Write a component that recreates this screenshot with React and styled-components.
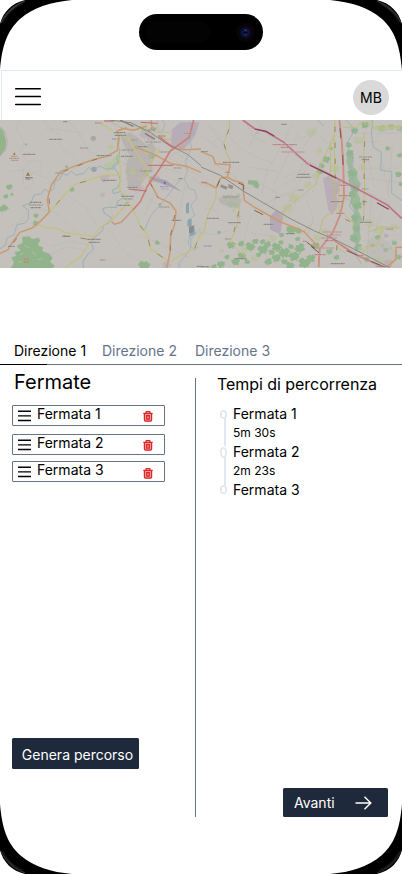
import React from "react";
import styled, { createGlobalStyle } from "styled-components";

const GlobalStyle = createGlobalStyle`
  * { box-sizing: border-box; }
  body { margin: 0; background: #fff; }
  button { font: inherit; border: 0; padding: 0; background: none; color: inherit; }
`;

const Screen = styled.div`
  position: relative;
  width: 402px;
  height: 874px;
  overflow: hidden;
  display: flex;
  flex-direction: column;
  background: #fff;
  color: #000;
  font-family: Inter, "Liberation Sans", sans-serif;
  font-size: 14px;
  line-height: 17px;
`;

const Bezel = styled.svg`
  position: absolute;
  inset: 0;
  pointer-events: none;
`;

const StatusBar = styled.div`
  height: 70px;
  flex: none;
  padding-top: 14px;
  display: flex;
  justify-content: center;
  align-items: flex-start;
`;

const Island = styled.svg`
  display: block;
`;

const Header = styled.header`
  height: 50px;
  flex: none;
  margin-left: 1px;
  padding: 0 13px;
  border-top: 1px solid #e2e8f0;
  border-left: 1px solid #e2e8f0;
  display: flex;
  align-items: center;
  justify-content: space-between;
`;

const IconButton = styled.button`
  display: flex;
  flex: none;
  margin-top: ${(p) => p.$drop || 0}px;
`;

const Avatar = styled.div`
  width: 36px;
  height: 35px;
  margin-top: 4px;
  border-radius: 50%;
  background: #d9d9d9;
  display: flex;
  align-items: center;
  justify-content: center;
`;

const MapView = styled.svg`
  display: block;
  flex: none;
  width: 402px;
  height: 148px;
  background: #c4c0bb;
`;

const Tabs = styled.nav`
  display: grid;
  flex: none;
  grid-template-columns: 88px 93px auto;
  justify-items: start;
  align-content: start;
  height: 97px;
  padding: 74px 14px 0;
  background: linear-gradient(90deg, #000 47px, #64748b 47px) bottom / 100% 1px no-repeat;
`;

const Tab = styled.button`
  height: 17px;
  white-space: nowrap;
  color: ${(p) => (p.$active ? "#000" : "#64748b")};
`;

const Columns = styled.main`
  flex: 1;
  display: grid;
  grid-template-columns: 195px 1px 206px;
`;

const StopsPanel = styled.section`
  display: flex;
  flex-direction: column;
  align-items: flex-start;
  padding: 5px 0 0 12px;
`;

const Title = styled.h1`
  margin: 0 0 11px 2px;
  font-size: 20px;
  line-height: 24px;
  font-weight: 400;
`;

const Divider = styled.div`
  height: 439px;
  margin-top: 13px;
  background: #64748b;
`;

const StopRow = styled.div`
  width: 153px;
  height: 21px;
  margin-bottom: ${(p) => p.$gap}px;
  padding: 0 11px 0 5px;
  border: 1px solid #64748b;
  border-radius: 1px;
  display: flex;
  align-items: flex-start;
`;

const StopName = styled.span`
  flex: 1;
  margin: -1px 0 0 6px;
`;

const Grip = styled.svg`
  margin-top: 4px;
  flex: none;
`;

const TimesPanel = styled.section`
  display: flex;
  flex-direction: column;
  padding: 10px 14px 57px 21px;
`;

const Subtitle = styled.h2`
  margin: 0 0 11px;
  font-size: 16px;
  line-height: 19px;
  font-weight: 400;
  letter-spacing: -0.05px;
  white-space: nowrap;
`;

const Timeline = styled.div`
  display: flex;
  gap: 5px;
`;

const Track = styled.svg`
  flex: none;
  margin: 3px 0 0 2px;
`;

const Legs = styled.div`
  display: grid;
  grid-template-rows: repeat(5, 19px);
`;

const Duration = styled.span`
  font-size: 12px;
`;

const ActionButton = styled.button`
  display: flex;
  align-items: center;
  justify-content: ${(p) => (p.$wide ? "center" : "space-between")};
  width: ${(p) => (p.$wide ? 127 : 105)}px;
  height: ${(p) => (p.$wide ? 31 : 29)}px;
  padding: ${(p) => (p.$wide ? "1px 0 0 4px" : "0 16px 0 11px")};
  margin-top: ${(p) => (p.$wide ? "256px" : "auto")};
  align-self: ${(p) => (p.$wide ? "flex-start" : "flex-end")};
  border-radius: 1.5px;
  background: #1e293b;
  color: #fff;
  white-space: nowrap;
`;

const corners = [
  { id: "nw", transform: "", tone: "#3a3a3a" },
  { id: "ne", transform: "translate(402 0) scale(-1 1)", tone: "#303030" },
  { id: "sw", transform: "translate(0 874) scale(1 -1)", tone: "#2c2c2c" },
  { id: "se", transform: "translate(402 874) scale(-1 -1)", tone: "#242424" },
];

function PhoneFrame() {
  return (
    <Bezel width="402" height="874" viewBox="0 0 402 874" aria-hidden="true">
      {corners.map(({ id, transform, tone }) => (
        <g key={id} transform={transform}>
          <path d="M0 70V24C3 12 12 3 25 0H72C51 2 34 7 20 19C7 31 2 46 0 70Z" fill="#000" />
          <path d="M1 23C5 13 13 5 25 1C16 6 7 12 1 23Z" fill={tone} stroke={tone} strokeWidth="1" />
          <path d="M3 23C6 15 15 7 23 4" fill="none" stroke="#161616" strokeWidth="1" />
        </g>
      ))}
    </Bezel>
  );
}

/* Map geometry uses three units per pixel; the east half starts at x = 603. */
const woods = "#92b48c";
const labelsWest = [
  [147,73,40],[68,118,38],[75,188,24],[240,99,26],[341,53,36],[344,61,34],[336,72,20],[394,75,18],[427,45,38],[473,63,26],[436,81,46],[414,95,28],[366,105,34],[363,124,36],[290,122,44],[419,168,38],[478,111,28],[521,159,22],[307,196,43],[382,217,30],[364,244,38],[371,252,28],[354,271,36],[478,276,30],[515,316,30],[89,262,36],[86,270,42],[91,278,32],[187,364,24],[260,373,42],[266,382,33],[300,435,18],[24,394,20],[590,454,16],[166,174,24],[190,20,13],[285,24,20],[536,191,12]
];
const labelsEast = [
  [241,28,17],[66,142,50],[290,178,36],[286,187,44],[475,126,38],[482,134,22],[66,246,46],[223,247,14],[290,225,18],[484,222,18],[390,260,34],[18,310,36],[82,323,38],[188,328,30],[254,356,28],[72,372,18],[8,393,24],[102,431,34],[389,446,42],[478,322,34],[0,110,20],[0,455,26],[484,260,14],[554,342,22]
];

function blobs(list, fill, opacity = 1) {
  return list.map(([x, y, r], i) => {
    const k = i % 2 ? -1 : 1;
    return (
      <path
        key={i}
        fill={fill}
        opacity={opacity}
        transform={`translate(${x} ${y}) scale(${(k * r) / 10} ${r / 10}) rotate(${(i * 37) % 50})`}
        d="M-9 -3l3-4 4 2 3-4 5 3 4-1-2 5 2 3-4 3 1 4-5-2-3 3-5-1 1-4-5-2z"
      />
    );
  });
}

function Road({ d, color, width = 4, dash }) {
  return <path d={d} fill="none" stroke={color} strokeWidth={width} strokeDasharray={dash} strokeLinejoin="round" />;
}

function Labels({ items, color = "#62635f" }) {
  return items.map(([x, y, w]) => (
    <g key={`${x}-${y}`}>
      <path d={`M${x} ${y}h${w}`} stroke="#d2cfc9" strokeWidth="6" opacity=".4" />
      <path d={`M${x} ${y}h${w}`} stroke={color} strokeWidth="3.6" strokeDasharray="3 1 5 1 2 1" opacity=".65" />
    </g>
  ));
}

function RouteMap() {
  return (
    <MapView viewBox="0 0 1206 444" preserveAspectRatio="none" role="img">
      <g transform="translate(0 -15)">
        <path d="M0 38l10 10 8 30-2 24-16 22z" fill={woods} />
        <path d="M0 36l14 13 8 30-6 28-16 14" fill="none" stroke="#b59bae" strokeWidth="2" />
        <path d="M66 366l22-2 8 8 20-4 5 8-8 14 17 8-4 10 22 8 10 14-8 10 14 12-6 7H32l10-16-8-16 14-4-4-12 18-4-12-14 18-10z" fill={woods} />
        <path d="M74 392l14 6M96 410l12 10M60 420l10-6M112 434l14-3M54 440l12 2" stroke="#b4bda0" strokeWidth="3" />
        {blobs([[28,216,10],[18,244,8],[36,238,5],[4,282,10],[14,278,11],[216,224,8],[455,124,10],[438,177,9],[472,383,8],[382,265,6],[432,452,18],[108,302,8],[107,325,9],[408,96,7],[480,268,5],[462,42,8],[78,88,4],[200,155,5]], woods)}
        <path d="M515 45l25-23h58l-12 40-35 42-38-10z" fill="#b8acb9" />
        <path d="M360 65l30-13 30 20 18 18 18-8 14 20-16 30 4 30-25 34-26 34-22-12-8-55 10-45z" fill="#b3aeac" opacity=".7" />
        {blobs([[314,190,15],[434,58,15],[452,66,14],[466,190,14],[420,220,12],[308,240,8],[500,451,13]], "#baa6b4", .6)}
        {blobs([[328,154,18],[350,133,13],[442,108,12],[430,40,14],[398,170,11],[332,96,9],[370,240,9]], "#b5c397", .7)}
        <path d="M448 184l50 12 48 34-55-22-46-17z" fill="#a8a0ae" />
        <circle cx="280" cy="70" r="8" fill="#a9a7a3" />
        <circle cx="282" cy="163" r="8" fill="#a19f9d" />
        <Road color="#aaa8a4" width={1} dash="5 3" d="M60 15L48 42 72 78 62 115 86 144 70 164 70 208 78 224 100 206 94 175 120 168 125 138 90 139M140 40L174 55 183 98 226 125M205 15L245 68 265 108 312 129M20 170L72 166 142 190M114 282L162 290 220 343 262 382M210 246L260 279 291 332M155 395L205 379 265 388M151 418L204 395 253 406M330 260L340 319M324 340L375 412 436 450M412 357L480 385 572 430M440 239L480 277 507 300M480 155L548 175M520 110L574 140M130 15L150 40 250 55M25 335L57 322 78 292" />
        <Road color="#b2b0ab" width={1} d="M370 80L438 158M390 70L378 136 425 192M356 105L450 96M360 155L424 124M380 174L435 118M370 197L447 146M375 211L433 168M366 60L390 200M408 61L415 214M343 130L391 156M456 162L570 85M432 210L350 298M510 130L596 182M470 220L430 305M555 210L535 310M577 188L603 210" />
        <Road color="#8cabb7" width={2.2} d="M357 63l-5 24 8 21-10 20 6 17-15 14-24 4-17-10-24 13-10-9-14 18-24 6-14-13-12 13-15-5-8 17-14 6-4 23-16 8-12-8-8 14-23 4-10 24-24 8 17 13 0 28-12 12-22 4-9 30-21 10-5 22-16 10-12 29-24 7" />
        <Road color="#8cabb7" width={2.5} d="M358 112l-1 25-20 17 17 19 8 24-9 21-17 8 5 10 22-7 8 19-19 12-2 17-24 0-18 3 6 16 20 11-9 18-14 6-4 16-20 17-14 17 8 22-18 15-14 22 2 30" />
        <Road color="#8cabb7" width={1.8} d="M567 20l15 29-14 22 7 26-19 43 7 28-10 24 14 28 16 5 8 25-19 20 12 31-23 18 12 35-9 32 19 18 12-8M487 15l8 14-10 22M540 193L500 246 451 304 434 346M603 340l-29 30-4 36-34 40 4 13" />
        <path d="M558 266l9-5v34h-9zM565 312h10v22h-13zM569 346l15-7 2 18-18 9z" fill="#87a5ae" />
        <path d="M567 335l17-4-7 22-10 1z" fill="#8d8a89" />
        <Road color="#c3c17c" width={3.5} d="M365 42L353 100 363 175 358 221 373 246 386 264 344 306 296 342 270 378 244 424 195 459M359 182l-40-4-86 27-18 10-34 40-30 34-39 38 19 9 41 4 24 13 84 10M378 62l21 32 40 67 14 42M480 100L448 155 426 198M288 20l24 10 26 18M386 264l15 24 20 43 22 31 10 40 53 37M508 440l38-21 38-19 19-49" />
        <Road color="#8e834e" width={2.5} dash="18 34" d="M180 255l-30 34M420 331l22 31 10 40 53 37M240 203l40-9M190 362l70 10M584 400l19-49" />
        <Road color="#b7b28a" width={2} d="M386 26l66 26 58 0M472 15l4 34 35 36M375 170l49-8M322 15l48 27M500 72l55 4" />
        <Road color="#c89a71" width={4.5} d="M380 38l-29 10 6 22-5 36-29 17-45 12-55 19-40 15-29 41-12 43 6 38-24 25-28 23-37 13-24 33-11 19-24 12M453 15l3 22-9 12M363 40l38 6 39-13M398 285L364 322 343 328 334 319M446 195l28 52 36 17 18 24-4 40-12 35-2 50-10 46M478 60l28 30 23 12 29 2 45-2M405 96l58 22 50 28 48 8 42 18" />
        <Road color="#8d6e4d" width={2.5} dash="16 30" d="M190 170l70-28 60-20M147 250l4 38M450 203l24 44M524 300l-12 60-2 70M50 370l-24 33" />
        <Road color="#cc7f76" width={5} d="M581 15l-14 52-56 41-32 53-36 51-21 46-23 27M475 64l46 35M312 18h30" />
        <Road color="#b9625f" width={2.5} d="M444 151h76M422 22l50 3M385 222l55 6" />
        <Road color="#7d7b7a" width={2.3} d="M330 15l62 8 59 29 42 30 71 37 39 33" />
        <Road color="#84807d" width={4} d="M360 15l40 19M435 55l30 18" />
        <path d="M78 182l6-11 6 11zM39 119l4-7 4 7z" fill="#92744a" />
        <path d="M77 186h14v8H77z" fill="#8f8055" opacity=".7" />
        <path d="M494 199l5 5-6 5-3-5z" fill="#7970b5" />
        <path d="M73 429l5 8 6-8 2 14H71z" fill="#9c9b55" />
        <Labels items={labelsWest} />
        <Labels items={[[480,215,26],[484,222,22]]} color="#827cae" />
        <Labels items={[[34,124,18],[28,130,30],[34,136,20],[553,55,22],[537,96,16],[68,430,18],[70,438,16]]} color="#a4755f" />
      </g>
      <g transform="translate(603 -15)">
        <path d="M440 105l14 4 4 20-6 22 18 18-2 20 12 18-12 22 10 24-8 30 14 30-10 24 6 34-14 26-8-30-2-40 4-40-12-26 4-34-10-30 6-30-12-24z" fill={woods} opacity=".75" />
        {blobs([[54,352,6],[448,114,11],[452,176,14],[463,220,13],[454,239,12],[470,272,14],[462,309,13],[466,341,12],[458,370,13],[472,397,12],[492,30,12],[461,47,11],[443,90,10],[542,40,12],[571,36,10],[596,40,10],[560,100,8],[596,121,8],[592,178,10],[376,133,12],[362,152,9],[357,170,10],[390,101,6],[270,345,15],[292,347,11],[242,360,8],[90,390,13],[121,386,10],[147,395,15],[163,379,10],[185,404,16],[200,388,11],[226,396,15],[250,413,18],[279,424,17],[297,399,16],[309,444,18],[330,430,14],[226,429,14],[202,440,12],[122,423,13],[104,440,13],[60,448,12],[39,455,9],[267,451,13],[344,392,12],[385,410,10],[407,427,9],[580,384,8],[554,405,8],[530,367,9],[515,391,7],[593,426,9],[497,433,9],[600,207,8],[185,380,9],[212,412,10],[240,382,8],[270,395,9],[290,372,8],[172,420,8],[250,440,10],[138,440,9],[78,426,8]], woods)}
        <path d="M141 196l28 1 6 14-4 10-12-4-2-7-16-2z" fill={woods} />
        {blobs([[332,52,15],[356,107,10],[278,248,18],[258,280,17],[241,304,15],[345,183,12],[402,160,14],[472,75,15],[484,158,12],[434,248,13],[370,350,13],[350,368,12],[504,325,15],[535,345,16],[580,336,12],[535,434,16],[480,404,12],[98,285,7],[62,407,8],[130,403,10],[505,18,10],[320,210,12],[160,430,12],[215,370,12]], "#b8c197", .6)}
        <path d="M515 32h85v14l-30-4-20 8-35-6z" fill="#b8c197" opacity=".8" />
        <path d="M366 190l21-10 14 17 14 12-8 28 3 37-16 26-12-16z" fill="#b8a9b7" opacity=".85" />
        <path d="M207 302l18-16 21 18-8 54-31-14z" fill="#b5a7b8" />
        <path d="M50 252l30-14 22 4 20 10-8 28-26-2-26-11z" fill="#b4b0aa" opacity=".7" />
        {blobs([[90,267,10],[112,242,7],[105,270,7],[74,248,7]], "#9cbc97", .7)}
        <path d="M60 208l20 8-3 8-19-7zM82 207l15 6-3 10-12-5z" fill="#94908e" />
        {blobs([[406,227,12],[410,204,12],[112,304,7],[563,444,14],[555,362,8]], "#b8a7b3", .7)}
        <path d="M500 376l35-10 30 15 28 42-26 30-42-10-30-29z" fill="#b8b3af" opacity=".4" />
        {blobs([[577,378,5],[568,400,5],[545,392,6],[520,410,5]], "#9cbfae", .8)}
        <Road color="#aaa8a4" width={1} dash="5 3" d="M14 20L58 61 66 98M88 67l36 38 51 24 47 19M274 30l-44 83-29 47-21 80M132 15l24 50 45 23M166 15l48 60 40 25M281 80l59-29 37 29 26 8M276 120l66 28 32 26M132 220l52-13 44 28-14 48M0 210l49 10M200 375l-5 82M258 319l28-57 55-37M319 258l18 53-16 46M0 350l47 10 39-16M149 300l-22 80M150 354l60 9M420 388l64 38M505 233l50 23 42 56M516 330l66 20" />
        <Road color="#b2b0ab" width={1} d="M20 30L68 90M33 80l60-28M0 60l55 42M40 145l70 45M140 155l90 15M175 35l-30 60M295 45L220 210M355 25L302 105M315 130l-40 75M243 190l90-40M207 235l112-72M170 275l112-50M310 170L245 300M450 55h150M460 80h75M475 160h120M500 122l20 95M540 120l25 130M574 80l-12 150M439 183l160 20M512 240l-15 205M548 281l-40 102M485 378l108-21M50 310l70 30M13 280l44 10M60 240l63 18M77 220l-22 50M94 225l-14 50M111 231l-10 45M205 330l39-28M213 340l33-50M220 290l14 60" />
        <Road color="#8cabb7" width={2.2} d="M435 15l23 25-5 20-13 20 4 19-8 22 20 6 0 23-15 10 15 17-4 18 13 20-18 20 7 15-9 23 18 23 0 24 14 22-16 25 9 24-8 25 19 30M515 15l-4 40 6 41 24 16-2 54 33 3 0 66 31 22M163 58l7-6 6 4M350 15l18 18" />
        <Road color="#bdbc7b" width={3} d="M86 15L84 43 68 82 77 117 90 142M46 223L44 252 20 300 8 352 0 365M115 264l-4 58-12 34-12 22 24 29 24 18M402 15l-3 58 4 134-5 65M389 85l-1 117M490 50l-2 73 3 75-3 115M400 60L360 146 345 207 267 270 231 307M408 282l-41 27-13 45M500 352l47-17 49 4M490 396l41-6 16-56M495 401l-15 27M432 300l26 25M425 37h42l10-14 32 8M523 35h78M405 394l31 22M301 356l38-36M412 204l3 95" />
        <Road color="#8e834e" width={2.5} dash="16 32" d="M84 43L68 82 76 112M114 289l-15 60-12 25M402 35l1 155M491 80l-2 140M489 255l-2 64M433 313l25 12M408 390l-3 40" />
        <Road color="#ca996e" width={4.5} d="M0 110l36 15 7 21 45 3-9 37 17 10 29 8 5 52 29 20 74 42 75 31 45 48M79 186l-21 4-12 29-25-13-21-4M603 397h-18l-1 37-28 23" />
        <Road color="#7c6247" width={3} d="M56 196l-8 18M112 204l16 6 0 14M160 286l26 13M318 382l24 18" />
        <Road color="#cb8176" width={5} d="M415 15l7 60 5 80 2 90-11 53-22 53-40 52-3 53M387 365l22 18 52 34 83 38" />
        <Road color="#d1ad8f" width={1.2} d="M415 15l7 60 5 80 2 90-11 53-22 53-40 52-3 53" />
        <Road color="#8b5249" width={3} dash="30 50" d="M417 40l8 80 3 70" />
        <Road color="#bd758a" width={5} d="M125 15l37 27 33 8 52 31 41 37 34 30 51 24 52 27 66 34 67 36 45 42" />
        <Road color="#89405d" width={3.5} d="M162 42l33 7 25 14M327 151l79 39M528 263l35 20" />
        <Road color="#747473" width={2.2} d="M0 156l58 25 72 49 72 42 68 40 71 36 69 30 76 38 80 42" />
        <Road color="#656460" width={3} d="M330 394l24 19M437 407l38 16M510 439l42 17" />
        <Labels items={labelsEast} />
        <Labels items={[[215,89,72],[240,97,28],[242,111,70],[314,147,16],[73,172,14],[2,202,16],[414,195,14],[415,211,26],[414,242,34],[406,295,24],[365,351,58],[374,360,45],[360,369,48],[372,377,28],[348,399,52],[340,419,34],[467,422,20],[524,454,44],[306,379,12]]} color="#ae5963" />
      </g>
    </MapView>
  );
}

function MenuIcon() {
  return (
    <svg width="26" height="18" viewBox="0 0 26 18" fill="none" stroke="#000" strokeWidth="1.5" strokeLinecap="round">
      <path d="M.7 .8h24.6M.7 8.6h24.6M.7 16.4h24.6" />
    </svg>
  );
}

function Stop({ name, gap, drop = 5 }) {
  return (
    <StopRow $gap={gap}>
      <Grip width="13" height="12" viewBox="0 0 13 12" stroke="#000" strokeWidth="1.4">
        <path d="M0 1.3h13M0 5.9h13M0 10.5h13" />
      </Grip>
      <StopName>{name}</StopName>
      <IconButton $drop={drop} aria-label={`Elimina ${name}`}>
        <svg width="10" height="11" viewBox="0 0 10 11" fill="none">
          <path d="M1 3h8v6.2q0 1.4-1.4 1.4H2.4Q1 10.6 1 9.2z" fill="#f29c9c" />
          <path d="M.3 2.3h9.4M3 2.3V1.2q0-.6.6-.6h2.8q.6 0 .6.6v1.1M1.4 2.8v6q0 1.3 1.3 1.3h4.6q1.3 0 1.3-1.3v-6M3.7 4.6v3.5h2.6V4.6z" stroke="#dc2626" strokeWidth="1.25" />
        </svg>
      </IconButton>
    </StopRow>
  );
}

export default function App() {
  return (
    <>
      <GlobalStyle />
      <Screen>
        <StatusBar>
          <Island width="124" height="36" viewBox="0 0 124 36">
            <rect width="124" height="36" rx="18" fill="#000" />
            <rect x="6" y="7" width="66" height="22" rx="11" fill="#030303" />
            <circle cx="106.5" cy="18.5" r="9.5" fill="#08040a" />
            <circle cx="106.5" cy="18.5" r="5.5" fill="#0d0d2a" />
            <circle cx="106.5" cy="18.5" r="3.5" fill="#10184d" />
            <path d="M104.5 17.8h4v1.6h-4z" fill="#03030d" />
            <circle cx="106.5" cy="16.2" r=".8" fill="#4549a0" />
            <circle cx="106.5" cy="21" r=".8" fill="#283d91" />
          </Island>
        </StatusBar>
        <Header>
          <IconButton $drop={3} aria-label="Menu"><MenuIcon /></IconButton>
          <Avatar>MB</Avatar>
        </Header>
        <RouteMap />
        <Tabs>
          <Tab $active>Direzione 1</Tab>
          <Tab>Direzione 2</Tab>
          <Tab>Direzione 3</Tab>
        </Tabs>
        <Columns>
          <StopsPanel>
            <Title>Fermate</Title>
            <Stop name="Fermata 1" gap={8} />
            <Stop name="Fermata 2" gap={6} />
            <Stop name="Fermata 3" gap={0} drop={6} />
            <ActionButton $wide>Genera percorso</ActionButton>
          </StopsPanel>
          <Divider />
          <TimesPanel>
            <Subtitle>Tempi di percorrenza</Subtitle>
            <Timeline>
              <Track width="9" height="90" viewBox="0 0 9 90" fill="none" stroke="#e2e8f0">
                <path d="M6 10v28M6 48v29" strokeWidth="2" />
                <ellipse cx="4.5" cy="6.5" rx="2.7" ry="3.7" strokeWidth="1.8" />
                <ellipse cx="4.5" cy="44.5" rx="2.7" ry="4.7" strokeWidth="1.8" />
                <ellipse cx="4.5" cy="81.5" rx="2.7" ry="3.7" strokeWidth="1.8" />
              </Track>
              <Legs>
                <span>Fermata 1</span>
                <Duration>5m 30s</Duration>
                <span>Fermata 2</span>
                <Duration>2m 23s</Duration>
                <span>Fermata 3</span>
              </Legs>
            </Timeline>
            <ActionButton>
              Avanti
              <svg width="17" height="14" viewBox="0 0 17 14" fill="none" stroke="#fff" strokeWidth="1.4">
                <path d="M.5 7H16M9.5.8L15.8 7l-6.3 6.2" />
              </svg>
            </ActionButton>
          </TimesPanel>
        </Columns>
        <PhoneFrame />
      </Screen>
    </>
  );
}
